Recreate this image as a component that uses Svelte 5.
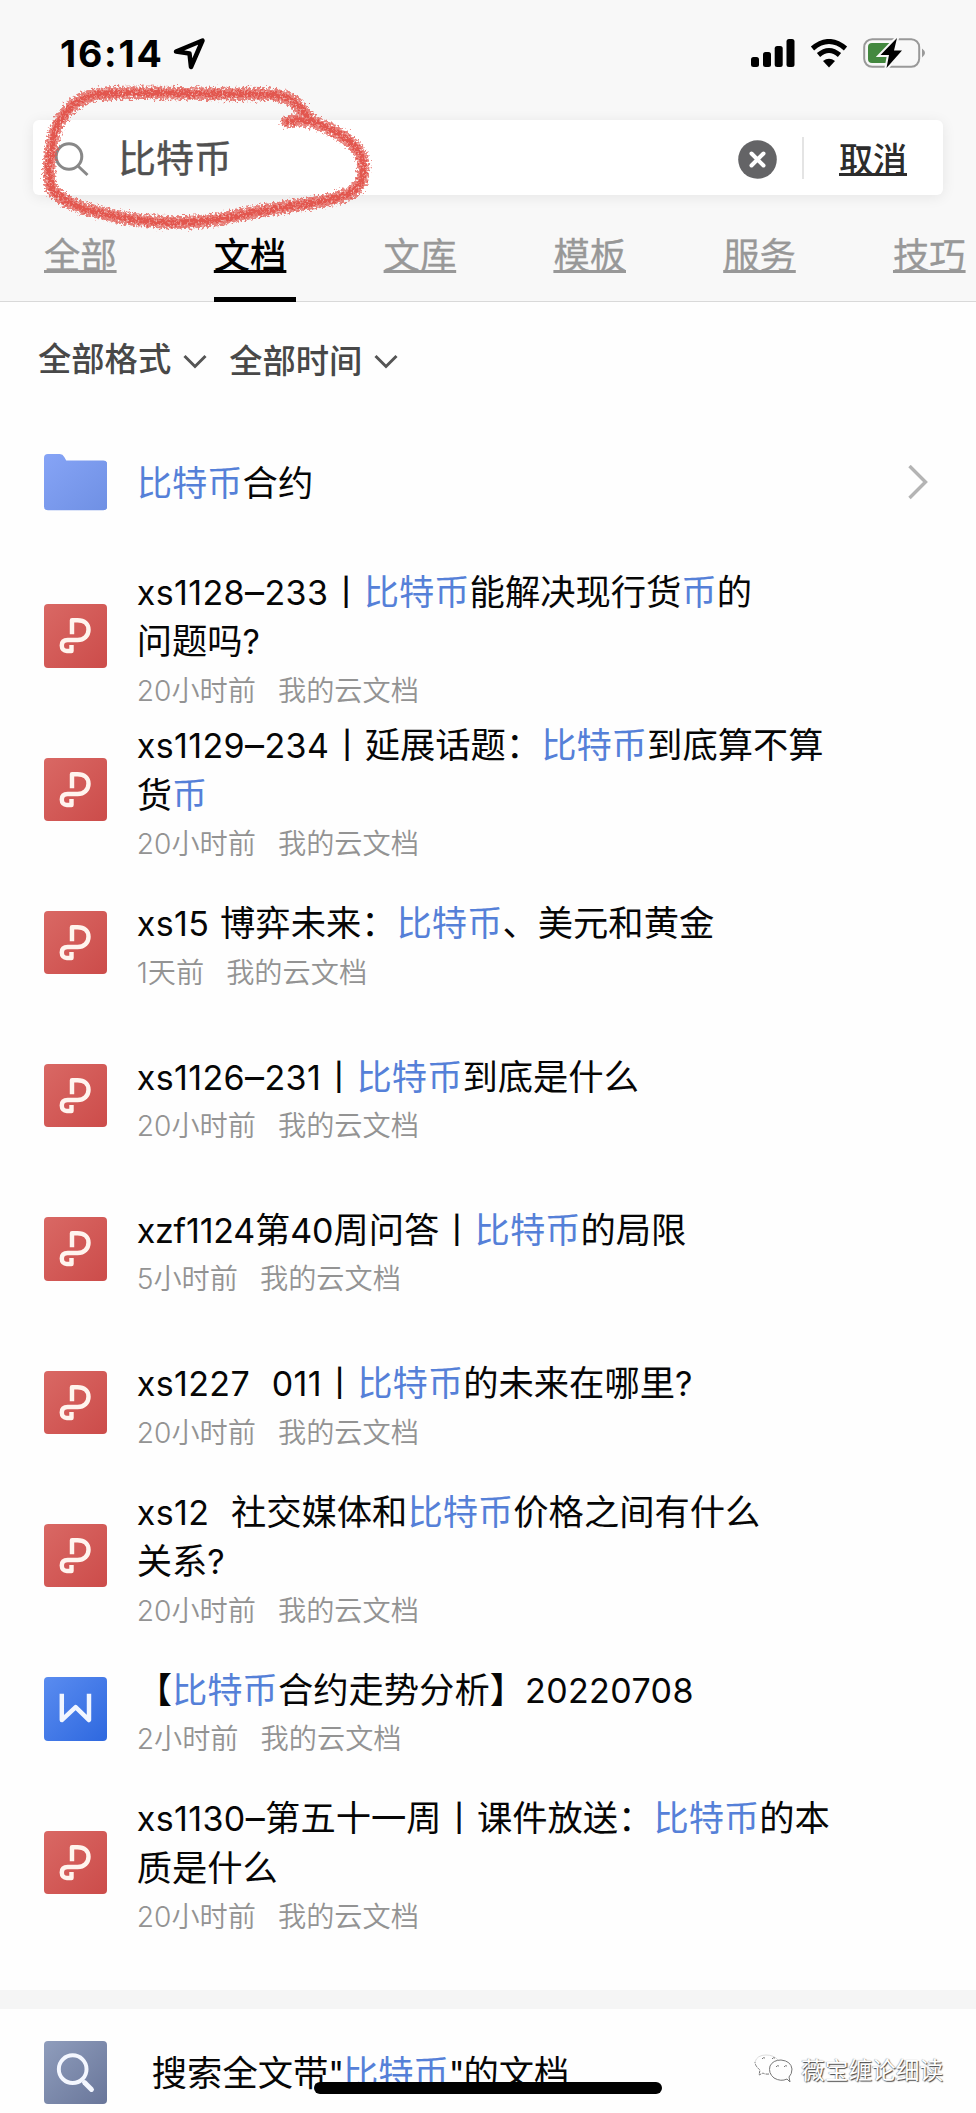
<script>
  const query = '比特币';
  const tabs = ['全部', '文档', '文库', '模板', '服务', '技巧'];
  const activeTab = '文档';
  const filters = ['全部格式', '全部时间'];

  const results = [
    { type: 'folder', lines: ['比特币合约'] },
    { type: 'pdf', lines: ['xs1128–233丨比特币能解决现行货币的', '问题吗?'], time: '20小时前' },
    { type: 'pdf', lines: ['xs1129–234丨延展话题：比特币到底算不算', '货币'], time: '20小时前' },
    { type: 'pdf', lines: ['xs15 博弈未来：比特币、美元和黄金'], time: '1天前' },
    { type: 'pdf', lines: ['xs1126–231丨比特币到底是什么'], time: '20小时前' },
    { type: 'pdf', lines: ['xzf1124第40周问答丨比特币的局限'], time: '5小时前', tight: true },
    { type: 'pdf', lines: ['xs1227  011丨比特币的未来在哪里?'], time: '20小时前' },
    { type: 'pdf', lines: ['xs12  社交媒体和比特币价格之间有什么', '关系?'], time: '20小时前' },
    { type: 'word', lines: ['【比特币合约走势分析】20220708'], time: '2小时前' },
    { type: 'pdf', lines: ['xs1130–第五十一周丨课件放送：比特币的本', '质是什么'], time: '20小时前' }
  ];

  const circle =
    'M287 122C300 118 316 122 330 129C348 138 363 150 363 165C364 181 360 188 348 194C335 200 318 202 300 205C275 208 250 213 225 218C190 225 150 223 120 217C90 211 62 204 52 189C47 178 49 155 54 134C62 110 80 96 100 94C140 91 180 94 220 94C250 94 272 93 285 97C297 101 303 113 312 121';

  /**
   * Splits a title in matched, latin and plain parts
   * @param {string} text
   */
  function split(text) {
    return text
      .split(/(比特币|币|–|[\x20-\x7e]+)/)
      .filter((part) => part)
      .map((part) => ({
        text: part,
        hit: part.endsWith('币'),
        latin: /^[\x20-\x7e–]+$/.test(part),
        dash: part === '–'
      }));
  }
</script>

{#snippet rich(text)}{#each split(text) as part}<span class:hit={part.hit} class:latin={part.latin} class:dash={part.dash}>{part.text}</span>{/each}{/snippet}

<div class="screen">
  <header>
    <div class="status">
      <span class="clock">16:14</span>
      <svg class="location" width="34" height="34" viewBox="0 0 34 34">
        <path d="M4 15.5 30.5 4.5 19 31 17.5 17.5Z" fill="none" stroke="#000" stroke-width="4.5" stroke-linejoin="round" />
      </svg>
      <svg class="signal" width="44" height="30" viewBox="0 0 44 30">
        <rect x="0" y="18" width="8" height="10" rx="2.5" />
        <rect x="12" y="13" width="8" height="15" rx="2.5" />
        <rect x="23.7" y="7" width="8" height="21" rx="2.5" />
        <rect x="35.5" y="0" width="8" height="28" rx="2.5" />
      </svg>
      <svg class="wifi" width="38" height="30" viewBox="0 0 38 30">
        <path d="M2.5 9.5Q19-4.5 35.5 9.5" fill="none" stroke="#000" stroke-width="5" />
        <path d="M8.5 16Q19 7 29.5 16" fill="none" stroke="#000" stroke-width="5" />
        <path d="M13 22Q19 17.5 25 22L19 28.5Z" />
      </svg>
      <svg class="battery" width="64" height="34" viewBox="0 0 64 34">
        <rect x="1.2" y="3.2" width="55" height="27.6" rx="8" fill="none" stroke="#999" stroke-width="2" />
        <path d="M59 12.5Q65 17 59 21.5Z" fill="#999" />
        <path d="M9 7H31V27H9Q5 27 5 23V11Q5 7 9 7Z" fill="#43883f" />
        <path d="M34 2 17.5 19H26L23.5 32 39 14.5H31Z" stroke="#f8f8f8" stroke-width="4" />
        <path d="M34 2 17.5 19H26L23.5 32 39 14.5H31Z" />
      </svg>
    </div>

    <div class="search">
      <svg class="lens" width="36" height="36" viewBox="0 0 36 36" fill="none" stroke="#888" stroke-width="3">
        <circle cx="15" cy="15.5" r="12.8" />
        <path d="M24 25 33.5 34" />
      </svg>
      <span class="query">{query}</span>
      <svg class="clear" width="39" height="39" viewBox="0 0 39 39">
        <circle cx="19.5" cy="19.5" r="19.3" fill="#646466" />
        <path d="M13.5 13.5 25.5 25.5M25.5 13.5 13.5 25.5" stroke="#fff" stroke-width="4" stroke-linecap="round" />
      </svg>
      <span class="divider"></span>
      <span class="cancel">取消</span>
    </div>

    <nav>
      {#each tabs as tab}
        <div class="tab" class:active={tab === activeTab}><span>{tab}</span></div>
      {/each}
    </nav>
  </header>

  <div class="filters">
    {#each filters as filter}
      <div class="filter">
        <span>{filter}</span>
        <svg width="24" height="16" viewBox="0 0 24 16">
          <path d="M1.5 2 12 12.5 22.5 2" fill="none" stroke="#555" stroke-width="3" />
        </svg>
      </div>
    {/each}
  </div>

  <main>
    {#each results as item}
      <div class="row" class:tight={item.tight}>
        {#if item.type === 'folder'}
          <svg class="icon" viewBox="0 0 64 64">
            <defs>
              <linearGradient id="folder" x1="0" y1="0" x2="1" y2="1">
                <stop offset="0" stop-color="#86a4f6" />
                <stop offset="1" stop-color="#6f90e4" />
              </linearGradient>
            </defs>
            <path d="M4 3H16Q19 3 20.5 6L22.5 9.5H60Q64 9.5 64 13.5V56Q64 60 60 60H4Q0 60 0 56V7Q0 3 4 3Z" fill="url(#folder)" />
          </svg>
        {:else}
          <div class="icon {item.type}">
            {#if item.type === 'pdf'}
              <svg viewBox="0 0 64 64" fill="none" stroke="#fff4ee" stroke-width="4.5">
                <path d="M28.3 30.5V16.5H34C41 16.5 45 20.5 45 26C45 32 40.5 36.5 34 36.5H24C19.5 36.5 18 39 18 42C18 45.5 20 47.5 23 47.5H27.8V41.5" stroke-linejoin="round" />
              </svg>
            {:else}
              <svg viewBox="0 0 64 64" fill="none" stroke="#f1f6ff" stroke-width="4.5">
                <path d="M18 17V43.5L32 30.5 45.5 43.5V17" stroke-linejoin="round" />
              </svg>
            {/if}
          </div>
        {/if}
        <div class="info">
          {#each item.lines as line}
            <div class="title">{@render rich(line)}</div>
          {/each}
          {#if item.time}
            <div class="meta"><span>{item.time}</span><span>我的云文档</span></div>
          {/if}
        </div>
        {#if item.type === 'folder'}
          <svg class="more" width="20" height="36" viewBox="0 0 20 36">
            <path d="M1.5 1 17.5 17 1.5 33" fill="none" stroke="#b4b4b4" stroke-width="3.4" />
          </svg>
        {/if}
      </div>
    {/each}
  </main>

  <footer>
    <div class="icon full">
      <svg viewBox="0 0 64 64" fill="none" stroke="#f4f7ff" stroke-width="4">
        <circle cx="29" cy="28.5" r="14" />
        <path d="M41 42 48 49" stroke-width="5" stroke-linecap="round" />
      </svg>
    </div>
    <div class="title">{@render rich('搜索全文带"比特币"的文档')}</div>
  </footer>

  <div class="watermark">
    <svg width="40" height="30" viewBox="0 0 40 30" fill="none" stroke="#777" stroke-width="1">
      <path d="M15 20Q11 20.5 9 19L5 21 6 16Q1 12 1 8" stroke-dasharray="3 1" />
      <path d="M1 8Q3 1 12 1 20 1 24 6" stroke="#ddd" />
      <path d="M33 25Q27 28 20 24 14 19 16 12 19 6 27 6 37 7 38 15 38 20 35 23L36 28Z" />
      <path d="M8 5Q9 3 11 4M18 5Q19 3 21 4M22 13Q23 11 25 12M30 13Q31 11 33 12" />
    </svg>
    <span>薇宝缠论细读</span>
  </div>
  <div class="home-bar"></div>

  <svg class="scribble" width="360" height="170" viewBox="30 75 360 170">
    <defs>
      <filter id="crayon" x="-5%" y="-10%" width="110%" height="120%" color-interpolation-filters="sRGB">
        <feTurbulence type="fractalNoise" baseFrequency="0.45" numOctaves="2" seed="4" result="noise" />
        <feDisplacementMap in="SourceGraphic" in2="noise" scale="10" xChannelSelector="R" yChannelSelector="G" result="rough" />
        <feColorMatrix in="noise" type="matrix" values="0 0 0 0 0  0 0 0 0 0  0 0 0 0 0  0 0 0 -2.5 2.4" result="grain" />
        <feComposite in="rough" in2="grain" operator="in" />
      </filter>
    </defs>
    <g fill="none" stroke="#e2564e" stroke-linecap="round" stroke-linejoin="round" filter="url(#crayon)">
      <path d={circle} stroke-width="12.5" opacity="0.75" />
      <path d={circle} stroke-width="6" />
    </g>
  </svg>
</div>

<style>
  :global(body) {
    margin: 0;
    background: #fff;
  }

  .screen {
    position: relative;
    width: 976px;
    height: 2113px;
    overflow: hidden;
    background: #fefefe;
    font-family: 'Noto Sans CJK SC', sans-serif;
    color: #060606;
  }

  svg {
    display: block;
    flex-shrink: 0;
  }

  header {
    box-sizing: border-box;
    height: 302px;
    background: #f8f8f8;
    border-bottom: 1px solid #d9d9d9;
  }

  .status {
    box-sizing: border-box;
    height: 120px;
    padding: 36px 49px 0 60px;
    display: flex;
    align-items: flex-start;
  }

  .clock {
    width: 112px;
    font: 700 37.5px/36px Inter, sans-serif;
    letter-spacing: 1.8px;
    color: #000;
  }

  .signal {
    margin: 3px 15px 0 auto;
  }

  .wifi {
    margin: 3px 15px 0 0;
  }

  .search {
    box-sizing: border-box;
    height: 75px;
    margin: 0 33px;
    padding: 0 36px 0 21px;
    display: flex;
    align-items: center;
    background: #fff;
    border-radius: 6px;
    box-shadow: 0 2px 14px rgba(0, 0, 0, 0.08);
  }

  .lens,
  .clear {
    margin-top: 3px;
  }

  .query {
    flex: 1;
    height: 75px;
    margin-left: 28px;
    font-size: 38px;
    line-height: 71px;
    color: #505050;
    -webkit-text-stroke: 0.4px #505050;
  }

  .divider {
    width: 2px;
    height: 42px;
    margin: 0 35px 0 25px;
    background: #e4e4e4;
  }

  .cancel {
    font-size: 34px;
    font-weight: 500;
    line-height: 75px;
    color: #2c2c2c;
  }

  .cancel,
  .tab span {
    text-decoration: underline;
    text-decoration-thickness: 3px;
    text-decoration-skip-ink: none;
    text-underline-offset: 1px;
  }

  nav {
    height: 107px;
    padding-left: 44px;
    display: flex;
  }

  .tab {
    box-sizing: border-box;
    flex: 0 0 82px;
    height: 107px;
    margin-right: 87.8px;
    padding-top: 33px;
    font-size: 36.3px;
    line-height: 50px;
    color: #989898;
    -webkit-text-stroke: 0.3px #989898;
  }

  .tab.active {
    border-bottom: 5px solid #000;
    font-weight: 500;
    color: #000;
    -webkit-text-stroke: 0;
  }

  .filters {
    height: 104px;
    padding-left: 38px;
    display: flex;
  }

  .filter {
    display: flex;
    height: 50px;
    margin: 30px 22px 0 0;
    font-size: 33.3px;
    font-weight: 500;
    line-height: 50px;
    color: #484848;
  }

  .filter svg {
    margin: 22px 0 0 12px;
  }

  .filter + .filter span {
    padding-top: 2px;
  }

  .row {
    height: 153.3px;
    padding: 0 48px 0 44px;
    display: flex;
    align-items: center;
  }

  .icon {
    width: 63.3px;
    height: 63.3px;
    flex-shrink: 0;
    border-radius: 4px;
  }

  .pdf {
    background: linear-gradient(135deg, #d96864, #cc4c4a);
  }

  .word {
    background: linear-gradient(135deg, #5a8cf0, #2e68df);
  }

  .full {
    background: linear-gradient(135deg, #8f9dbc, #69769a);
  }

  .info {
    flex: 1;
    margin: -3px 0 0 29.4px;
  }

  .title {
    height: 49.5px;
    font-size: 35.3px;
    line-height: 49.5px;
    white-space: pre;
  }

  .hit {
    color: #5580d8;
  }

  .latin {
    font-family: Inter, sans-serif;
    font-size: 34px;
    letter-spacing: 0.4px;
    word-spacing: 0.8px;
    line-height: 0;
  }

  .tight .latin {
    letter-spacing: -0.2px;
  }

  .dash {
    font-size: 38px;
  }

  .meta {
    display: flex;
    gap: 22px;
    margin-top: 14px;
    font: 350 28.2px/26px Inter, 'Noto Sans CJK SC', sans-serif;
    color: #939393;
  }

  footer {
    height: 104px;
    margin-top: 51px;
    padding: 32px 0 0 44px;
    display: flex;
    border-top: 19px solid #f5f5f5;
  }

  footer .title {
    margin: 5px 0 0 44.5px;
  }

  footer .latin {
    letter-spacing: -1.2px;
  }

  .watermark {
    position: absolute;
    top: 2051px;
    left: 754px;
    display: flex;
    align-items: center;
    gap: 7px;
    font-size: 23.7px;
    line-height: 36px;
    color: #fff;
    text-shadow: 1px 1px 1px #444, -0.5px 0 1px #999;
  }

  .home-bar {
    position: absolute;
    top: 2082px;
    left: 314px;
    width: 348px;
    height: 12px;
    border-radius: 6px;
    background: #000;
  }

  .scribble {
    position: absolute;
    top: 75px;
    left: 30px;
  }
</style>
